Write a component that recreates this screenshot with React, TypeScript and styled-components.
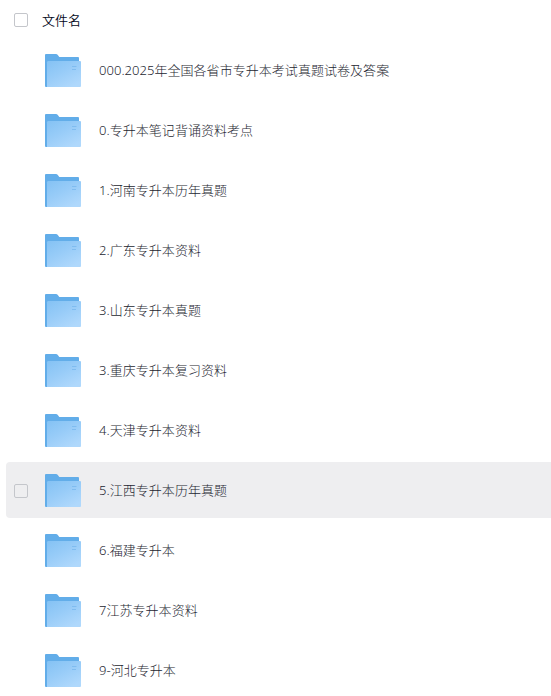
import React, { useState } from 'react';
import styled, { createGlobalStyle } from 'styled-components';

interface RowProps {
    readonly $active?: boolean;
}

const GlobalStyle = createGlobalStyle`
    body {
        margin: 0;
        background: #fff;
        overflow: hidden;
        font-family: 'Noto Sans', 'Noto Sans CJK SC', sans-serif;
        font-size: 13px;
        font-weight: 300;
    }
`;

const Panel = styled.div`
    box-sizing: border-box;
    height: 696px;
    padding-left: 6px;
    overflow: hidden;
`;

const Checkbox = styled.input<{ $hidden?: boolean }>`
    appearance: none;
    box-sizing: border-box;
    flex-shrink: 0;
    width: 14px;
    height: 14px;
    margin: 0;
    border: 1px solid #c4c6cb;
    border-radius: 2px;
    background: transparent;
    visibility: ${(props) => (props.$hidden ? 'hidden' : 'visible')};
`;

const Header = styled.div`
    display: flex;
    align-items: center;
    height: 40px;
    padding-left: 8px;
    margin-bottom: 2px;
    color: #03081a;
`;

const List = styled.div`
    display: flex;
    flex-direction: column;
    gap: 4px;
`;

const Row = styled.div<RowProps>`
    display: flex;
    flex-shrink: 0;
    align-items: center;
    box-sizing: border-box;
    height: 56px;
    padding-left: 8px;
    border-radius: 4px 0 0 4px;
    color: #1c1e30;
    background: ${(props) => (props.$active ? '#eeeef0' : 'transparent')};

    ${Checkbox} {
        margin-top: 2px;
    }
`;

const Title = styled.span`
    margin-left: 14px;
    font-weight: 350;
    line-height: 20px;
`;

const Icon = styled.svg`
    flex-shrink: 0;
    width: 36px;
    height: 33px;
    margin: 1px 18px 0 17px;
`;

const Name = styled.span`
    line-height: 20px;
    letter-spacing: 0.04px;
    white-space: nowrap;
`;

const files = [
    '000.2025年全国各省市专升本考试真题试卷及答案',
    '0.专升本笔记背诵资料考点',
    '1.河南专升本历年真题',
    '2.广东专升本资料',
    '3.山东专升本真题',
    '3.重庆专升本复习资料',
    '4.天津专升本资料',
    '5.江西专升本历年真题',
    '6.福建专升本',
    '7江苏专升本资料',
    '9-河北专升本',
];

const FolderIcon = () => (
    <Icon viewBox="0 0 36 33">
        <defs>
            <linearGradient id="folder-front" x1="0" y1="0" x2="0.7" y2="1">
                <stop offset="0" stopColor="#84c2f4" />
                <stop offset="0.5" stopColor="#98ccf8" />
                <stop offset="1" stopColor="#afd8fc" />
            </linearGradient>
        </defs>
        <path d="M0 1Q0 0 1 0H11Q12 0 12.6 .8L14.3 3H33Q34 3 34 4V33H1Q0 33 0 32Z" fill="#62ade9" />
        <path d="M2 8.2Q2 7 3.2 7H35Q36 7 36 8V32Q36 33 35 33H2Z" fill="url(#folder-front)" />
        <path d="M27 12.5H31.5M27 15.5H31" stroke="#79b7ee" strokeWidth="0.8" />
    </Icon>
);

const App = () => {
    const [active, setActive] = useState(7);

    return (
        <>
            <GlobalStyle />
            <Panel>
                <Header>
                    <Checkbox type="checkbox" />
                    <Title>文件名</Title>
                </Header>
                <List>
                    {files.map((file, index) => (
                        <Row key={file} $active={index === active} onMouseEnter={() => setActive(index)}>
                            <Checkbox type="checkbox" $hidden={index !== active} />
                            <FolderIcon />
                            <Name>{file}</Name>
                        </Row>
                    ))}
                </List>
            </Panel>
        </>
    );
};

export default App;
